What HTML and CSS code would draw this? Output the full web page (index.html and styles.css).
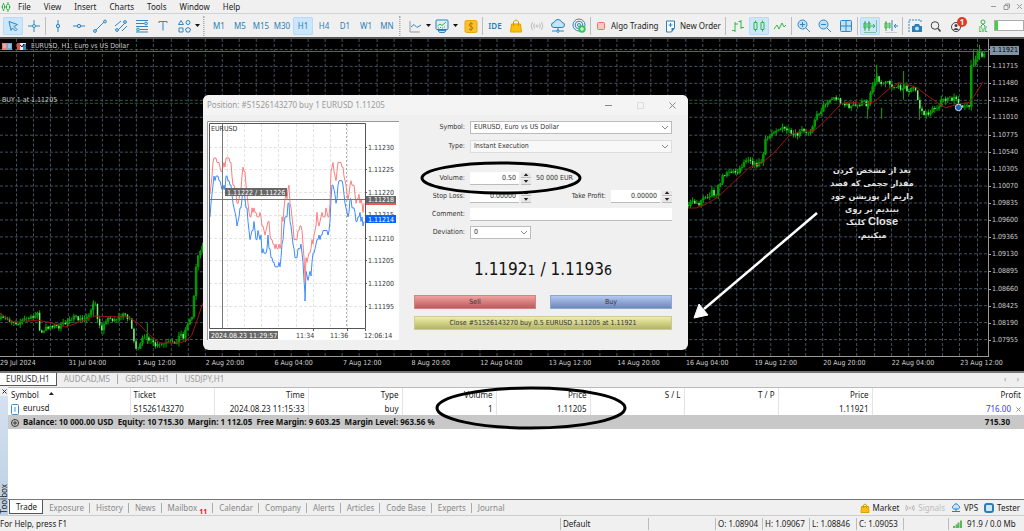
FILE: index.html
```html
<!DOCTYPE html>
<html lang="en">
<head>
<meta charset="utf-8">
<title>EURUSD,H1</title>
<link rel="stylesheet" href="styles.css">
</head>
<body>
<div class="app">
  <header class="menubar">
    <svg class="logo" width="11" height="10" viewBox="0 0 11 10"><g fill="none" stroke="#2fb344"><path d="M1.5 5h1M9.5 5h1"/><rect x="2.5" y="2.5" width="2" height="5" rx="1"/><rect x="6.5" y="2.5" width="3" height="5" rx="1"/><path d="M3.5 1v1.500M3.500 7.500V9M8 0v2.500M8 7.500V10M4.500 5h2"/></g></svg>
    <nav class="menus">
      <button>File</button><button>View</button><button>Insert</button><button>Charts</button><button>Tools</button><button>Window</button><button>Help</button>
    </nav>
    <div class="winctl">
      <button aria-label="Minimize"><svg width="7" height="7" viewBox="0 0 7 7"><path d="M1 3.500h5"/></svg></button>
      <button aria-label="Restore"><svg width="7" height="7" viewBox="0 0 7 7"><path d="M1 2.500h4v4H1zM2.500 2V1h4v4H5.500"/></svg></button>
      <button aria-label="Close"><svg width="7" height="7" viewBox="0 0 7 7"><path d="M1 1l5 5M6 1L1 6"/></svg></button>
    </div>
  </header>

  <div class="toolbar">
    <button class="tool on" aria-label="Cursor"><svg width="16" height="16" viewBox="0 0 16 16"><path class="b f" d="M4 3.500l8.500 3-3.500 2 3 3-1.500 1.500-3-3-1.500 2.500z"/></svg></button>
    <button class="tool" aria-label="Crosshair"><svg width="16" height="16" viewBox="0 0 16 16"><path class="b" d="M8 2v4M8 10v4M2 8h4M10 8h4"/><circle class="b" cx="8" cy="8" r="1.500"/></svg></button>
    <i class="sep"></i>
    <button class="tool" aria-label="Vertical line"><svg width="16" height="16" viewBox="0 0 16 16"><path class="b" d="M8 2v4M8 10v4"/><circle class="b f" cx="8" cy="8" r="1.700"/></svg></button>
    <button class="tool" aria-label="Horizontal line"><svg width="16" height="16" viewBox="0 0 16 16"><path class="b" d="M2 8h4M10 8h4"/><circle class="b f" cx="8" cy="8" r="1.700"/></svg></button>
    <button class="tool" aria-label="Trendline"><svg width="16" height="16" viewBox="0 0 16 16"><path class="b" d="M4 12l8-8"/><circle class="b f" cx="3" cy="13" r="1.400"/><circle class="b f" cx="13" cy="3.500" r="1.400"/></svg></button>
    <button class="tool" aria-label="Channel"><svg width="16" height="16" viewBox="0 0 16 16"><path class="b" d="M2 8l6-5M5 12l7-7M9 13l5-5"/><circle class="b f" cx="4" cy="12" r="1.400"/><circle class="b f" cx="12" cy="4" r="1.400"/></svg></button>
    <button class="tool" aria-label="Fibonacci"><svg width="16" height="16" viewBox="0 0 16 16"><path class="b" d="M2 2.500h12M2 5.500h8M2 8.500h12M6 11.500h8M2 14h12"/><circle class="b f" cx="12" cy="5.500" r="1.400"/><circle class="b f" cx="4" cy="11.500" r="1.400"/></svg></button>
    <button class="tool" aria-label="Text"><svg width="16" height="16" viewBox="0 0 16 16"><path class="b" d="M4 5V3.500h8V5M8 3.500v9"/></svg></button>
    <button class="tool" aria-label="Shapes"><svg width="16" height="16" viewBox="0 0 16 16"><path class="b" d="M5 2.500l2.500 4h-5zM3 10h4v4H3z"/><circle class="b" cx="12" cy="4.500" r="2"/><path class="b" d="M12 9.500l2.500 1.500-1 3h-3l-1-3z"/></svg></button>
    <button class="caret" aria-label="More shapes"></button>
    <i class="grip"></i>
    <button class="tool tf">M1</button><button class="tool tf">M5</button><button class="tool tf">M15</button><button class="tool tf">M30</button><button class="tool tf on">H1</button><button class="tool tf">H4</button><button class="tool tf">D1</button><button class="tool tf">W1</button><button class="tool tf">MN</button>
    <i class="grip near"></i>
    <button class="tool" aria-label="Chart type"><svg width="16" height="16" viewBox="0 0 16 16"><path d="M3 3v11h10" fill="none" stroke="#999"/><path class="b" d="M4 9l3-2.500 3 3L14 7"/></svg></button>
    <button class="caret" aria-label="Chart types"></button>
    <button class="tool" aria-label="Indicators"><svg width="16" height="16" viewBox="0 0 16 16"><rect x="2" y="2" width="12" height="9.500" rx="1" fill="#dff0fb" stroke="#2980b9"/><path d="M3.500 8l2.500-2 2 1.500L12 4M4 10h1M6 9.500h1M8 10h1M10 9h1" fill="none" stroke="#32b04a"/><path class="b f" d="M4 12.500h8l-1.500 2h-5z"/></svg></button>
    <button class="caret" aria-label="More indicators"></button>
    <button class="tool coin" aria-label="Deposit"><svg width="16" height="16" viewBox="0 0 16 16"><rect x="2" y="2.500" width="12" height="12" rx="1.500" fill="#fbc02d" stroke="#e9a800"/><path d="M10 6Q8 4.500 6.500 6T8 8.500t1.500 2.500T6 11M8 4v9" fill="none" stroke="#b57f00"/></svg></button>
    <i class="sep"></i>
    <button class="tool tf ide">IDE</button>
    <button class="tool" aria-label="Market"><svg width="16" height="16" viewBox="0 0 16 16"><path d="M3.500 6h9l1 8h-11z" fill="#fbc108" stroke="#dda200"/><path d="M5.500 8V4q2.500-4 5 0v4" fill="none" stroke="#d39a00"/></svg></button>
    <button class="tool" aria-label="Signals"><svg width="16" height="16" viewBox="0 0 16 16"><g fill="none" stroke="#bbb"><circle cx="8" cy="8" r="1"/><path d="M5.500 5.500q-1.500 2.500 0 5M10.500 5.500q1.500 2.500 0 5M3.500 4q-2.500 4 0 8M12.500 4q2.500 4 0 8"/></g></svg></button>
    <button class="tool" aria-label="VPS"><svg width="16" height="16" viewBox="0 0 16 16"><path d="M4 9.500a2.500 2.500 0 0 1 0-5q1-3 4-3t4 3a2.500 2.500 0 0 1 0 5z" fill="#c4e4f8" stroke="#2980b9"/><path class="b" d="M8 9.500V13M2 13h4M10 13h4"/><circle class="b" cx="8" cy="13" r="1.300"/></svg></button>
    <button class="tool" aria-label="Copy trading"><svg width="16" height="16" viewBox="0 0 16 16"><g class="b"><circle cx="8" cy="7" r="6"/><circle cx="8" cy="7" r="3.800"/><circle cx="8" cy="7" r="1.500"/></g><circle cx="11" cy="11" r="3.700" fill="#38c457"/><path d="M11 9v4M9 11h4" stroke="#fff"/></svg></button>
    <i class="sep"></i>
    <button class="cmd algo"><svg width="16" height="16" viewBox="0 0 16 16"><rect x="4.500" y="4.500" width="7" height="7" rx="1" fill="#fcc9c2" stroke="#ec7263"/></svg>Algo Trading</button>
    <button class="cmd order"><svg width="16" height="16" viewBox="0 0 16 16"><path d="M4.500 3h8v7l-3 4h-5z" fill="#fff" stroke="#2980b9"/><path d="M12.500 10h-3v4z" fill="#2980b9"/><path class="b" d="M8.500 5v4M6.500 7h4"/></svg>New Order</button>
    <i class="sep"></i>
    <button class="tool" aria-label="Bar chart"><svg width="16" height="16" viewBox="0 0 16 16"><path class="g" d="M5 4v10M5 6h3M2 12.500h3M11 2v9M8.500 3.500H11M11 9.500h3"/></svg></button>
    <button class="tool on" aria-label="Candlesticks"><svg width="16" height="16" viewBox="0 0 16 16"><path class="g" d="M3 4.500h3v7H3zM4.500 2.500v2M4.500 11.500v2M10 4.500h3v7h-3zM11.500 2.500v2M11.500 11.500v2"/></svg></button>
    <button class="tool" aria-label="Line chart"><svg width="16" height="16" viewBox="0 0 16 16"><path class="g" d="M2 11l3-4 2 4 3-6 2 4 2-2"/></svg></button>
    <i class="sep"></i>
    <button class="tool" aria-label="Zoom in"><svg width="16" height="16" viewBox="0 0 16 16"><circle class="b f" cx="6.500" cy="6.500" r="4.500"/><path class="b" d="M10 10l4 4M6.500 4v5M4 6.500h5"/></svg></button>
    <button class="tool" aria-label="Zoom out"><svg width="16" height="16" viewBox="0 0 16 16"><circle class="b f" cx="6.500" cy="6.500" r="4.500"/><path class="b" d="M10 10l4 4M4 6.500h5"/></svg></button>
    <button class="tool" aria-label="Tile windows"><svg width="16" height="16" viewBox="0 0 16 16"><rect class="b f" x="2.500" y="2.500" width="11" height="11" rx="1"/><path class="b" d="M8 2.500v11M2.500 8h11"/></svg></button>
    <i class="sep"></i>
    <button class="tool on" aria-label="Auto scroll"><svg width="16" height="16" viewBox="0 0 16 16"><path class="g" d="M2 5h2v5H2zM3 3v10M6 5h2v5H6zM7 3v10"/><path class="g" d="M9 8h4M11 6l2 2-2 2"/><path d="M14.500 2v12M2 14.500h12" stroke="#8ba" fill="none"/></svg></button>
    <button class="tool" aria-label="Chart shift"><svg width="16" height="16" viewBox="0 0 16 16"><path class="g" d="M2 5h2v5H2zM3 3v10M6 5h1v5H6z"/><path class="b" d="M9 2v11M15 8h-4M13 6l-2 2 2 2"/><path d="M2 14.500h12" stroke="#ccc"/></svg></button>
    <i class="sep"></i>
    <button class="tool" aria-label="Screenshot"><svg width="16" height="16" viewBox="0 0 16 16"><path class="b" d="M2 14V2h12v3" stroke-dasharray="2 1"/><path d="M5 8h2l1-2h4l1 2h2v6H5z" fill="#2980b9"/><circle cx="10" cy="10.500" r="2" fill="#bfe0f5"/></svg></button>
    <button class="tool" aria-label="Search"><svg width="16" height="16" viewBox="0 0 16 16"><circle cx="7" cy="7.500" r="3.800" fill="none" stroke="#444"/><path d="M10 10.500l2.500 3" stroke="#444" stroke-width="1.500"/></svg></button>
    <button class="tool acct" aria-label="Account"><svg width="16" height="16" viewBox="0 0 16 16"><circle cx="7" cy="9" r="4.500" fill="none" stroke="#444"/><circle cx="7" cy="7.500" r="1.500" fill="#444"/><path d="M4 12q3-4 6 0" fill="#444"/></svg><span class="badge">1</span></button>
    <button class="tool lvl" aria-label="Level"><svg width="10" height="9" viewBox="0 0 10 9"><circle class="g" cx="5" cy="3" r="2"/><path class="g" d="M3 7l2-2 2 2M1 8h3M6 8h3"/></svg><small>LVL</small></button>
    <span class="meter"></span>
  </div>

  <main class="chart">
    <div class="plot">
      <svg class="candles" viewBox="0 39 989 318" preserveAspectRatio="none">
        <path id="grid" class="grid"/>
        <path class="bid" d="M0 51.500H989"/>
        <path class="buyline" d="M0 103.500H989"/>
        <path id="bull" class="bull"/><path id="bear" class="bear"/>
        <path class="ma" d="M0 314L8 320 14 323 38 321 52 324 66 328 82 322 95 317 128 318 138 324 150 336 160 344 180 344 187 341 192 336 197 322 203 304"/>
        <path class="ma" d="M688 208.500H697L706 205 718 198 735 182 750 168 763 163 775 153 790 136 800 132 815 131 825 122 842 104 850 102 865 104 875 102 890 89 900 83 907 84 918 88 930 97 940 104 947 108 960 104 970 103 976 95 984 82"/>
      </svg>
      <div class="caption">
        <svg width="24" height="9" viewBox="0 0 24 9"><path d="M0 1h5v7H0z" fill="#e98079"/><path d="M5 1h5v7H5z" fill="#64aede"/><path d="M1 3h3M1 5h3M6 3h3M6 5h3" stroke="#fff" opacity=".6"/><path d="M15 1h9v7h-9z" fill="#eee"/><path d="M15 1h3v7h-3z" fill="#df5148"/><path d="M21 2h3v6h-3z" fill="#3886bd"/><path d="M18 3l2 2 2-3" stroke="#111" fill="none"/></svg>
        EURUSD, H1: Euro vs US Dollar
      </div>
      <div class="buylabel">BUY 1 at 1.11205</div>
      <svg class="pin" width="9" height="9" viewBox="0 0 9 9"><circle cx="4.500" cy="4.500" r="3.200" fill="#1764b5" stroke="#cfd9e2"/></svg>
    </div>
    <div class="prices">
      <span>1.11950</span><span>1.11715</span><span>1.11480</span><span>1.11245</span><span>1.11010</span><span>1.10775</span><span>1.10540</span><span>1.10305</span><span>1.10070</span><span>1.09835</span><span>1.09600</span><span>1.09365</span><span>1.09130</span><span>1.08895</span><span>1.08660</span><span>1.08425</span><span>1.08190</span><span>1.07955</span>
      <b class="last">1.11921</b>
    </div>
    <div class="times">
      <span>29 Jul 2024</span><span>31 Jul 04:00</span><span>1 Aug 12:00</span><span>2 Aug 20:00</span><span>6 Aug 04:00</span><span>7 Aug 12:00</span><span>8 Aug 20:00</span><span>12 Aug 04:00</span><span>13 Aug 12:00</span><span>14 Aug 20:00</span><span>16 Aug 04:00</span><span>19 Aug 12:00</span><span>20 Aug 20:00</span><span>22 Aug 04:00</span><span>23 Aug 12:00</span>
    </div>

    <section class="dialog">
      <div class="titlebar">
        <h1>Position: #51526143270 buy 1 EURUSD 1.11205</h1>
        <button aria-label="Minimize"><svg width="7" height="7" viewBox="0 0 7 7"><path d="M0 3.500h7"/></svg></button>
        <button aria-label="Maximize" class="dim" disabled><svg width="7" height="7" viewBox="0 0 7 7"><path d="M.5.5h6v6h-6z"/></svg></button>
        <button aria-label="Close"><svg width="7" height="7" viewBox="0 0 7 7"><path d="M.5.5l6 6M6.500.5l-6 6"/></svg></button>
      </div>
      <div class="dbody">
        <svg class="ticks" width="192" height="219" viewBox="207 121 192 219">
          <path d="M207 121h192v219H207z" fill="#fff"/>
          <path d="M207.500 340V121.500H399" stroke="#999" fill="none"/>
          <path class="tgrid" d="M209 147.500h156M209 169.500h156M209 192.500h156M209 215.500h156M209 238.500h156M209 260.500h156M209 283.500h156M209 306.500h156M227.500 124v205M244.500 124v205M261.500 124v205M278.500 124v205M296.500 124v205M313.500 124v205M330.500 124v205M347.500 124v205"/>
          <path d="M346.500 124v205" stroke="#aaa" stroke-dasharray="2 2"/>
          <path id="bidline" fill="none" stroke="#3d8bff"/>
          <path id="askline" fill="none" stroke="#ff7d7d"/>
          <path d="M222.500 124v205M209 199.500h156" stroke="#777"/>
          <path d="M209.500 123.500h156v205h-156zM365 147.500h2M365 169.500h2M365 192.500h2M365 215.500h2M365 238.500h2M365 260.500h2M365 283.500h2M365 306.500h2M313.500 329v2M347.500 329v2M365.500 329v2" stroke="#555" fill="none"/>
          <text x="211" y="131">EURUSD</text>
          <g><text x="368" y="150">1.11230</text><text x="368" y="172">1.11225</text><text x="368" y="195">1.11220</text><text x="368" y="217">1.11215</text><text x="368" y="241">1.11210</text><text x="368" y="263">1.11205</text><text x="368" y="286">1.11200</text><text x="368" y="309">1.11195</text></g>
          <path d="M366 196h30v7h-30zM225 188h62v8h-62zM209 331h69v8h-69z" fill="#666"/>
          <path d="M366 203h30v2h-30z" fill="#f25555"/><path d="M366 215h30v8h-30z" fill="#0a63f5"/>
          <g class="inv"><text x="368" y="202">1.11218</text><text x="368" y="222">1.11214</text><text x="227" y="195">1.11222 / 1.11226</text><text x="211" y="338">2024.08.23 11:29:57</text></g>
          <text x="296" y="338">11:34</text><text x="330" y="338">11:36</text><text x="364" y="338">12:06:14</text>
        </svg>
        <form class="form">
          <div class="row"><label for="sym">Symbol:</label><select id="sym"><option>EURUSD, Euro vs US Dollar</option></select></div>
          <div class="row type"><label for="typ">Type:</label><select id="typ"><option>Instant Execution</option></select></div>
          <div class="row vol"><label for="vol">Volume:</label><input id="vol" class="num" value="0.50"><span class="spin"><button type="button" aria-label="Increase"></button><button type="button" aria-label="Decrease" class="down"></button></span><span class="unit">50 000 EUR</span></div>
          <div class="row"><label for="sl">Stop Loss:</label><input id="sl" class="num" value="0.00000"><span class="spin"><button type="button" aria-label="Increase"></button><button type="button" aria-label="Decrease" class="down"></button></span><label for="tp" class="tp">Take Profit:</label><input id="tp" class="num" value="0.00000"><span class="spin"><button type="button" aria-label="Increase"></button><button type="button" aria-label="Decrease" class="down"></button></span></div>
          <div class="row"><label for="com">Comment:</label><input id="com" class="wide"></div>
          <div class="row"><label for="dev">Deviation:</label><select id="dev" class="dev"><option>0</option></select></div>
          <p class="quote">1.1192<small>1</small> / 1.1193<small>6</small></p>
          <div class="deal"><button type="button" class="sell">Sell</button><button type="button" class="buy">Buy</button></div>
          <button type="button" class="closepos">Close #51526143270 buy 0.5 EURUSD 1.11205 at 1.11921</button>
        </form>
      </div>
      <svg class="ring" width="162" height="34" viewBox="0 0 162 34"><ellipse cx="81" cy="17" rx="79" ry="15"/></svg>
    </section>

    <p class="note" lang="fa" dir="rtl">بعد از مشخص کردن<br>مقدار حجمی که قصد<br>داریم از پوزیشن خود<br>ببندیم بر روی<br><b>Close</b> کلیک<br>میکنیم.</p>
    <svg class="arrow" width="126" height="108" viewBox="0 0 126 108"><path d="M124 2L11 98" stroke="#fff" stroke-width="2.500"/><path d="M1 107l5-14 9 11z" fill="#fff" stroke="#fff"/></svg>
  </main>

  <div class="charttabs">
    <button class="active">EURUSD,H1</button><button>AUDCAD,M5</button><button>GBPUSD,H1</button><button>USDJPY,H1</button>
    <span class="scroll"><button aria-label="Scroll left">‹</button><button aria-label="Scroll right">›</button></span>
  </div>

  <section class="toolbox">
    <aside><button aria-label="Close toolbox"><svg width="5" height="5" viewBox="0 0 5 5"><path d="M.5.5l4 4M4.500.5l-4 4" stroke="#333"/></svg></button><span>Toolbox</span></aside>
    <div class="panel">
      <div class="tablewrap">
      <table>
        <colgroup><col class="c1"><col class="c2"><col class="c"><col class="c"><col class="c"><col class="c"><col class="c"><col class="c"><col class="c"><col></colgroup>
        <thead><tr><th class="l">Symbol <i class="asc"></i></th><th class="l">Ticket</th><th>Time</th><th>Type</th><th>Volume</th><th>Price</th><th>S / L</th><th>T / P</th><th>Price</th><th>Profit</th></tr></thead>
        <tbody><tr><td class="l"><svg width="8" height="11" viewBox="0 0 8 11"><rect x=".5" y=".5" width="7" height="10" rx="1" fill="#fff" stroke="#3a8fcb"/><path d="M4 3v5M3 4h2M3 6h2" stroke="#7db8e0"/></svg>eurusd</td><td class="l">51526143270</td><td>2024.08.23 11:15:33</td><td>buy</td><td>1</td><td>1.11205</td><td></td><td></td><td>1.11921</td><td class="profit">716.00<button aria-label="Close position"><svg width="5" height="5" viewBox="0 0 5 5"><path d="M.5.5l4 4M4.500.5l-4 4" stroke="#888"/></svg></button></td></tr></tbody>
        <tfoot><tr><td class="l" colspan="9"><svg width="8" height="8" viewBox="0 0 8 8"><circle cx="4" cy="4" r="3.500" fill="none" stroke="#333"/><path d="M4 2v4M2 4h4" stroke="#333"/></svg>Balance: 10 000.00 USD&nbsp; Equity: 10 715.30&nbsp; Margin: 1 112.05&nbsp; Free Margin: 9 603.25&nbsp; Margin Level: 963.56 %</td><td class="total">715.30</td></tr></tfoot>
      </table>
      <svg class="ring2" width="193" height="44" viewBox="0 0 193 44"><ellipse cx="96" cy="22" rx="94" ry="20"/></svg>
      </div>
      <div class="boxtabs">
        <button class="active">Trade</button><button>Exposure</button><button>History</button><button>News</button><button>Mailbox <sub>11</sub></button><button>Calendar</button><button>Company</button><button>Alerts</button><button>Articles</button><button>Code Base</button><button>Experts</button><button>Journal</button>
        <div class="services">
          <button><svg width="10" height="10" viewBox="0 0 10 10"><path d="M1.500 3.500h7l.5 6H1z" fill="#fbc108" stroke="#d9a000"/><path d="M3.500 5V2q1.500-2 3 0v3" fill="none" stroke="#d39a00"/></svg>Market</button>
          <button class="off"><svg width="10" height="10" viewBox="0 0 10 10"><g fill="none" stroke="#bbb"><circle cx="5" cy="5" r=".6"/><path d="M3 3q-1 2 0 4M7 3q1 2 0 4M1.500 2q-1.500 3 0 6M8.500 2q1.500 3 0 6"/></g></svg>Signals</button>
          <button><svg width="10" height="10" viewBox="0 0 10 10"><path d="M2.500 6a2 2 0 0 1 0-3.500q2.500-3.500 5 0a2 2 0 0 1 0 3.500z" fill="#c4e4f8" stroke="#2980b9"/><path d="M5 6v2.500M1 8.500h8" stroke="#2980b9"/></svg>VPS</button>
          <button><svg width="10" height="10" viewBox="0 0 10 10"><rect x="0" y="0" width="10" height="10" rx="3" fill="#2980b9"/><rect x="2" y="2" width="6" height="6" rx="1" fill="#cde9fb"/></svg>Tester</button>
        </div>
      </div>
    </div>
  </section>

  <footer class="status">
    <span class="help">For Help, press F1</span><span class="s1">Default</span><span class="s2"></span><span class="s3">O: 1.08904</span><span class="s3">H: 1.09067</span><span class="s3">L: 1.08846</span><span class="s3">C: 1.09053</span><span class="s4"></span><span class="net"><svg width="9" height="8" viewBox="0 0 9 8"><path d="M0 8V6h2v2zM2.500 8V4.500h2V8zM4.500 8V2.500h2V8zM7 8V.5h2V8z" fill="#5cb85c"/></svg>91.9 / 0.0 Mb</span>
  </footer>
</div>
<script src="chart.js"></script>
</body>
</html>
```
FILE: styles.css
```css
* { box-sizing: border-box; }
body { margin: 0; font: 8px/12px "Noto Sans", "Open Sans", sans-serif; color: #222; background: #f0f0f0; }
button, input, select { font: inherit; color: inherit; margin: 0; padding: 0; border: 0; border-radius: 0; background: none; }
svg { flex: none; display: block; }
.app { min-height: 100vh; display: flex; flex-direction: column; overflow: hidden; }

.menubar { height: 14px; display: flex; align-items: center; background: #f0f0f0; border-bottom: 1px solid #d2d2d2; }
.menus { display: flex; gap: 13px; padding-left: 7px; flex: 1; }
.winctl { display: flex; gap: 6px; padding-right: 1px; }
.winctl svg { fill: none; stroke: #999; }

.toolbar { height: 23px; display: flex; align-items: center; gap: 1px; padding-left: 3px; background: #f0f0f0; }
.tool { width: 20px; height: 18px; flex: none; display: flex; align-items: center; justify-content: center; border-radius: 2px; }
.on { background: #cce6fb; box-shadow: inset 0 0 0 1px #b5dafa; }
.b { fill: none; stroke: #3187c0; }
.f { fill: #bfe0f5; }
.g { fill: none; stroke: #35b44a; }
.tf { color: #2b7fb8; }
.ide { font-weight: 600; }
.coin { margin-left: 2px; }
.sep { width: 1px; height: 18px; background: #bdbdbd; margin-right: 1px; flex: none; }
.grip { width: 2px; height: 20px; border-left: 1px dotted #aaa; border-right: 1px dotted #ccc; margin: 0 3px 0 2px; flex: none; }
.grip.near { margin-left: 1px; }
.caret { width: 5px; height: 3px; flex: none; background: #111; clip-path: polygon(0 0, 100% 0, 50% 100%); }
.cmd { display: flex; align-items: center; gap: 2px; white-space: nowrap; flex: none; }
.algo { width: 68px; }
.order { width: 62px; }
.acct { position: relative; }
.badge { position: absolute; left: 10px; top: 0; width: 10px; height: 10px; border-radius: 50%; background: #e03a20; color: #fff; font-weight: 700; line-height: 10px; }
.lvl { flex-direction: column; color: #35b44a; margin-left: 5px; }
.lvl small { font-size: 5px; line-height: 5px; font-weight: 700; }
.meter { flex: 1; height: 11px; border: 1px solid #aaa; background: linear-gradient(90deg, #3fd23f 3px, #fff 3px); }

.chart { flex: 1 0 334px; position: relative; display: grid; grid-template: minmax(318px, 1fr) 14px / 1fr 35px; background: #000; border-top: 2px solid #555; color: #ccc; font: 7px/9px "DejaVu Sans Condensed", "DejaVu Sans", sans-serif; }
.plot { position: relative; border-right: 1px solid #999; border-bottom: 1px solid #999; }
.candles { position: absolute; width: 100%; height: 100%; }
.grid { stroke: #435160; stroke-dasharray: 3 2; fill: none; }
.bid { stroke: #56687a; }
.buyline { stroke: #0c700c; stroke-dasharray: 3 2; }
.bull { stroke: #00a800; fill: none; }
.bear { stroke: #7cf07c; fill: none; stroke-width: 1.5; }
.ma { stroke: #a01212; fill: none; }
.caption { position: absolute; left: 2px; top: 3px; display: flex; align-items: center; gap: 5px; }
.buylabel { position: absolute; left: 2px; top: 57px; }
.pin { position: absolute; left: 954px; top: 64px; }
.prices { position: relative; display: grid; grid-auto-rows: 1fr; align-items: center; padding: 2px 0 8px; }
.prices span { display: flex; align-items: center; gap: 1px; }
.prices span::before { content: ""; width: 2px; height: 1px; background: #aaa; }
.last { position: absolute; left: 1px; top: 7px; width: 29px; background: #8194a6; color: #000; padding-left: 2px; font-weight: 400; line-height: 9px; }
.times { grid-column: 1 / 3; display: flex; overflow: hidden; }
.times span { width: 6.7%; flex: none; white-space: nowrap; line-height: 12px; }

.dialog { position: absolute; left: 203px; top: 56px; width: 485px; height: 255px; background: #f0f0f0; color: #333; border-radius: 6px; overflow: hidden; font-size: 7px; }
.titlebar { display: flex; align-items: center; height: 20px; background: #f4f4f4; padding: 0 12px 0 4px; gap: 25px; }
.titlebar h1 { flex: 1; margin: 0; font: 8px/12px "Noto Sans", "Open Sans", sans-serif; color: #999; }
.titlebar svg { fill: none; stroke: #888; }
.titlebar .dim svg { stroke: #ddd; }
.dbody { display: flex; gap: 15px; padding: 6px 16px 0 4px; }
.ticks { font-size: 7px; }
.ticks text { fill: #333; }
.ticks .inv text { fill: #fff; }
.tgrid { stroke: #e4e4e4; stroke-dasharray: 3 2; fill: none; }
.form { flex: 1; display: flex; flex-direction: column; gap: 5px; }
.row { display: flex; align-items: center; height: 13px; }
.row label { width: 51px; text-align: right; margin-right: 5px; }
.row label.tp { width: auto; margin-left: auto; }
.type { margin-top: 1px; }
.vol { margin-top: 14px; }
.row select { flex: 1; height: 13px; padding: 0 3px; border: 1px solid #bbb; appearance: none; background: #fff; background-image: linear-gradient(45deg, transparent 45%, #888 45% 60%, transparent 60%), linear-gradient(-45deg, transparent 45%, #888 45% 60%, transparent 60%); background-size: 3px 3px; background-position: right 6px center, right 3px center; background-repeat: no-repeat; }
.row .dev { flex: none; width: 61px; }
.row.type select { background-color: #f8f8f8; border-color: #ddd; }
.row input { height: 13px; background: #fff; border-bottom: 1px solid #bbb; }
.row .wide { flex: 1; }
.row .num { width: 49px; text-align: right; padding-right: 3px; }
.spin { width: 10px; height: 12px; margin-left: 2px; display: flex; flex-direction: column; gap: 1px; }
.spin button { flex: 1; background: #e6e6e6; border-bottom: 1px solid #bbb; display: grid; place-items: center; }
.spin button::before { content: ""; width: 5px; height: 3px; background: #222; clip-path: polygon(50% 0, 100% 100%, 0 100%); }
.spin .down::before { clip-path: polygon(0 0, 100% 0, 50% 100%); }
.unit { margin-left: 5px; }
.quote { margin: 14px 0 0; text-align: center; font-size: 17px; line-height: 22px; color: #111; }
.quote small { font-size: 14px; }
.deal { display: flex; gap: 14px; margin-top: 9px; }
.deal button { flex: 1; height: 14px; }
.sell { background: linear-gradient(#f2a0a0, #b95c5c); border: 1px solid #d08585; }
.buy { background: linear-gradient(#b3c8f2, #6d87b8); border: 1px solid #8ea6d2; }
.closepos { height: 14px; margin-top: 2px; background: linear-gradient(#eeeea5, #b4b468); border: 1px solid #cccc90; }
.ring, .ring2 { position: absolute; fill: none; stroke: #000; stroke-width: 3; }
.ring { left: 217px; top: 66px; }
.ring2 { left: 427px; top: -2px; }
.note { position: absolute; left: 812px; top: 125px; width: 120px; margin: 0; text-align: center; color: #e4e4e4; font: 700 8px/13px "DejaVu Sans", sans-serif; }
.note b { font: 700 11px/11px "Liberation Sans", sans-serif; }
.arrow { position: absolute; left: 693px; top: 172px; }

.charttabs { height: 16px; display: flex; align-items: flex-start; background: #efefef; border-top: 2px solid #777; color: #999; }
.charttabs button { padding: 0 7px; border-right: 1px solid #aaa; line-height: 10px; margin-top: 1px; }
.charttabs .active { background: #fff; color: #333; border-right-color: #555; border-bottom: 1px solid #555; line-height: 12px; margin: 0; padding: 0 6px; }
.charttabs > button:nth-child(4) { border: 0; }
.scroll { margin-left: auto; }
.scroll button { border: 0; padding: 0 5px; }

.toolbox { flex: none; display: flex; height: 128px; }
.toolbox aside { width: 8px; display: flex; flex-direction: column; align-items: center; justify-content: space-between; padding: 2px 0; background: linear-gradient(#f0f0f0 9px, #d3e2f1 9px, #bccfe2); }
.toolbox aside span { writing-mode: vertical-rl; transform: rotate(180deg); line-height: 8px; }
.panel { flex: 1; min-width: 0; display: flex; flex-direction: column; }
.tablewrap { flex: 1; position: relative; background: #fff; border-top: 1px solid #bbb; border-bottom: 1px solid #777; }
table { width: 100%; table-layout: fixed; border-collapse: collapse; }
.c1 { width: 122px; } .c2 { width: 84px; } .c { width: 94px; }
th, td { padding: 0 3px; height: 13px; text-align: right; font-weight: 400; white-space: nowrap; border-right: 1px solid #e4e4e4; }
th { height: 14px; }
th:last-child, td:last-child { border-right: 0; }
.l { text-align: left; }
.asc { display: inline-block; width: 5px; height: 3px; margin: 0 0 3px 8px; background: #222; clip-path: polygon(50% 0, 100% 100%, 0 100%); }
td svg { display: inline-block; vertical-align: middle; margin-right: 4px; }
tbody td { line-height: 11px; }
.profit { color: #3b3bff; }
.profit button { margin-left: 5px; }
.profit svg { margin: 0; }
tfoot td { height: 14px; background: #c8c8c8; font-weight: 700; color: #111; border: 0; }
tfoot .total { padding-right: 14px; }
.boxtabs { height: 15px; display: flex; align-items: center; color: #888; }
.boxtabs > button { padding: 0 5px 0 6px; border-right: 1px solid #aaa; line-height: 10px; height: 10px; white-space: nowrap; }
.boxtabs > .active { height: 14px; margin-left: 1px; align-self: flex-start; background: #fff; color: #222; border: 1px solid #555; border-top: 0; }
.boxtabs > button:nth-child(12) { border: 0; }
.boxtabs sub { color: #e02020; font-size: 7px; font-weight: 700; line-height: 0; }
.services { margin-left: auto; display: flex; gap: 6px; padding-right: 4px; color: #222; }
.services button { display: flex; align-items: center; gap: 3px; }
.services .off { color: #bbb; }

.status { height: 16px; display: flex; align-items: center; border-top: 1px solid #ccc; white-space: nowrap; }
.status span { height: 12px; border-left: 1px solid #bbb; padding-left: 2px; }
.status .help { flex: 1; border: 0; padding: 0; }
.s1 { width: 88px; } .s2 { width: 67px; } .s3 { width: 47px; } .s4 { width: 45px; }
.status .net { width: 76px; display: flex; align-items: center; gap: 5px; padding-left: 4px; }
```
FILE: chart.js
```js
// Deterministic jitter so that the chart draws the same every time.
let seed = 7;
function rnd() {
  seed = (seed * 16807) % 2147483647;
  return seed / 2147483647 - 0.5;
}
function at(points, x) {
  for (let i = 1; i < points.length; i++) {
    const [x0, y0] = points[i - 1], [x1, y1] = points[i];
    if (x <= x1) return y0 + (y1 - y0) * (x - x0) / (x1 - x0);
  }
  return points[points.length - 1][1];
}
function set(id, d) { document.getElementById(id).setAttribute('d', d); }

let grid = '';
for (let i = 0; i < 57; i++) grid += `M${Math.round(16 + i * 17.17) + 0.5} 39V357`;
for (let i = 0; i < 18; i++) grid += `M0 ${Math.round(49 + i * 17.12) + 0.5}H989`;
set('grid', grid);

const early = [[0,320],[8,320],[17,324],[25,320],[33,319],[36,313],[38,315],[40,335],[43,334],[46,329],[52,326],[58,328],[65,325],[70,318],[78,320],[84,321],[90,313],[93,306],[96,307],[98,322],[101,333],[105,320],[112,320],[118,319],[125,315],[130,320],[133,335],[136,352],[138,352],[142,342],[146,334],[150,343],[156,347],[165,345],[175,344],[181,335],[184,338],[187,325],[192,318],[194,300],[195,272],[197,262],[200,250],[203,247]];
const late = [[688,206],[692,203],[700,204],[705,196],[710,196],[712,190],[716,196],[720,185],[724,176],[728,171],[733,173],[738,172],[742,167],[748,157],[752,161],[756,166],[763,162],[766,142],[770,137],[775,130],[782,129],[788,130],[792,136],[798,136],[803,130],[806,135],[811,131],[816,118],[822,110],[828,101],[835,98],[840,100],[845,105],[852,107],[858,106],[864,102],[868,106],[872,90],[877,76],[882,84],[888,79],[892,86],[900,88],[905,86],[908,92],[914,88],[917,92],[920,107],[926,116],[932,111],[938,107],[944,100],[952,100],[957,98],[960,104],[966,106],[970,108],[971.5,66],[976,64],[978,52],[982,56],[986,51]];
let bull = '', bear = '';
for (const series of [early, late]) {
  let open = series[0][1];
  const end = series[series.length - 1][0];
  for (let x = series[0][0] + 1; x < end; x += 2.146) {
    const close = at(series, x) + rnd() * 5;
    const top = Math.min(open, close), low = Math.max(open, close);
    const hi = top - Math.abs(rnd()) * 8, lo = low + Math.abs(rnd()) * 8;
    bull += `M${x} ${hi}V${lo}`;
    if (close > open) bear += `M${x} ${top}V${low}`;
    else bull += `M${x - 0.7} ${top}V${low}M${x + 0.7} ${top}V${low}`;
    open = close;
  }
}
bull += 'M882.5 108V119M877.5 65V82M868.500 100V119M904.500 71V100M920.500 105V120M972 100V60M974.500 49V67M980.500 45V60M147.500 324V345M93.500 301V318';
set('bull', bull);
set('bear', bear);

// Tick chart: quantised steps, the bid follows the ask at a fixed spread.
const ask = [[30,320],[38,240],[42,210],[56,210],[62,235],[66,240],[70,225],[76,225],[80,200],[84,215],[92,228],[98,270],[104,300],[110,345],[116,320],[122,300],[128,230],[132,238],[136,270],[140,300],[146,360],[150,385],[156,360],[163,350],[170,395],[176,370],[182,385],[186,415],[196,430],[204,390],[208,410],[214,450],[222,475],[240,478],[244,440],[246,400],[252,360],[256,320],[262,320],[265,285],[268,300],[271,350],[276,380],[282,430],[290,445],[298,420],[301,400],[308,440],[312,510],[314,575],[318,500],[324,505],[332,490],[338,450],[344,420],[352,380],[360,400],[368,370],[388,370],[390,340],[393,260],[398,215],[403,240],[409,280],[414,230],[420,212],[428,218],[433,260],[438,290],[445,325],[452,265],[458,290],[464,290],[468,340],[474,325],[484,330],[489,355],[493,330]];
function ticks(shift) {
  let d = '';
  for (let x = 30; x <= 493; x += 3) {
    const y = Math.round((at(ask, x) + shift + rnd() * 26) / 13.6) * 13.6;
    d += `${d ? 'L' : 'M'}${(200 + x / 3).toFixed(1)} ${(90 + y / 3).toFixed(1)}`;
    if (Math.abs(x - 314) < 2) d += `V${(90 + (575 + shift) / 3).toFixed(1)}`;
  }
  return d;
}
set('bidline', ticks(58));
set('askline', ticks(0));
```
